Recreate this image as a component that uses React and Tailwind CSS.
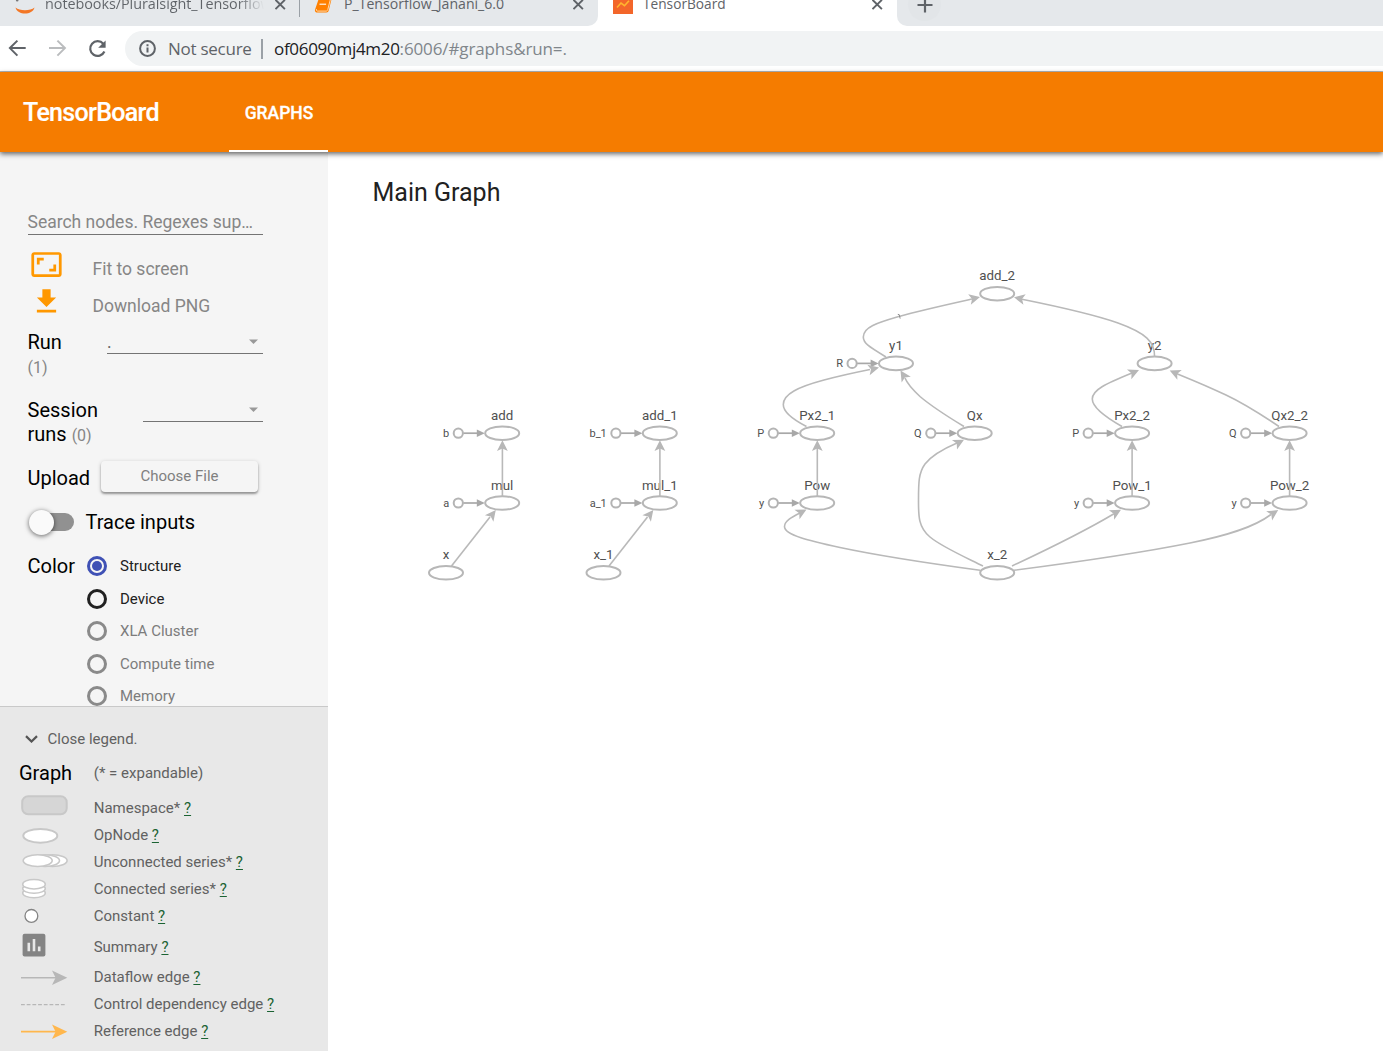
const CloseIcon = ({ className = '' }) => (
  <svg className={`size-[11px] shrink-0 ${className}`} viewBox="0 0 11 11" stroke="#5f6368" strokeWidth="1.9" fill="none">
    <path d="M0.5 0.8l9.4 9.4M9.9 0.8l-9.4 9.4" />
  </svg>
);

function BrowserChrome() {
  return (
    <div className="h-[72px] shrink-0 border-b border-[#b4b7ba] bg-white font-['Open_Sans',sans-serif] text-[#5f6368]">
      <div className="flex h-[26px] overflow-hidden">
        <div className="flex w-[598px] rounded-br-[10px] bg-[#e5e8eb]">
          <div className="-mt-[7px] flex h-[22px] w-[299px] items-center pl-[15px]">
            <svg className="mr-[10px] size-[20px] shrink-0 overflow-visible" viewBox="0 0 20 20" fill="#f37726">
              <path d="M0.5 13.6c4 3.6 15 3.6 19 0c-2 8-17 8-19 0z" />
              <circle cx="2.2" cy="6.3" r="1.3" fill="#767677" />
            </svg>
            <div className="w-[219px] overflow-hidden bg-linear-to-r from-[#5f6368] from-88% to-transparent bg-clip-text text-[14.4px] tracking-[-0.05px] whitespace-nowrap text-transparent">
              notebooks/Pluralsight_Tensorflow
            </div>
            <CloseIcon className="ml-[11px]" />
          </div>
          <div className="h-[17px] w-px bg-[#9aa0a6]" />
          <div className="-mt-[7px] flex h-[22px] w-[298px] items-center pl-[14px]">
            <svg className="mr-[11px] size-[19px] shrink-0 overflow-visible" viewBox="0 0 19 19">
              <path d="M5.5 1.5h10.6c1.3 0 1.9 0.8 1.6 1.9l-3 12.2c-0.3 1.3-1 2-2.4 2H3.4c-1.7 0-2.8-1.3-2.4-2.8z" fill="#ff8000" />
              <path d="M2.5 14c-0.5 1.4 0.1 2.1 1.3 2.1h8.2c1 0 1.5-0.6 1.8-1.6l2.8-11" stroke="#ffd9ae" strokeWidth="1" fill="none" />
              <path d="M5.5 9.2h6.6" stroke="#fff" strokeWidth="1.1" />
            </svg>
            <div className="w-[229px] text-[14.1px] whitespace-nowrap">P_Tensorflow_Janani_6.0</div>
            <CloseIcon />
          </div>
        </div>
        <div className="-mt-[7px] flex h-[22px] w-[299px] items-center pl-[15px]">
          <svg className="mr-[10px] size-[20px] shrink-0 self-end" viewBox="0 0 20 20">
            <rect width="20" height="19" fill="#f3662a" />
            <path d="M4 12.5l4-4.5 3.5 2.7 4.5-5" stroke="#ffb52e" strokeWidth="1.6" fill="none" />
          </svg>
          <div className="w-[229px] text-[13.7px] whitespace-nowrap">TensorBoard</div>
          <CloseIcon />
        </div>
        <div className="flex flex-1 rounded-bl-[10px] bg-[#e5e8eb] pl-[11px]">
          <div className="-mt-[12px] flex size-[33px] items-center justify-center rounded-full bg-[#e2e5e8]">
            <svg className="size-[16px]" viewBox="0 0 16 16" stroke="#5f6368" strokeWidth="2.2">
              <path d="M8 0.5v15M0.5 8h15" />
            </svg>
          </div>
        </div>
      </div>
      <div className="flex h-[45px] items-center text-[17px]">
        <div className="flex w-[125px] items-center pl-[8px]">
          <svg className="size-[19px]" viewBox="0 0 19 19" fill="none" stroke="#5f6368" strokeWidth="2">
            <path d="M17.7 9.1H2.5M9.4 1.6L1.9 9.1l7.5 7.5" />
          </svg>
          <svg className="ml-[21px] size-[19px]" viewBox="0 0 19 19" fill="none" stroke="#babcbe" strokeWidth="2">
            <path d="M1 9.1h15.5M9.4 1.6l7.5 7.5-7.5 7.5" />
          </svg>
          <svg className="ml-[20px] size-[22px]" viewBox="0 0 22 22">
            <path d="M16.3 5.8A7.4 7.4 0 1 0 17.4 13.5" fill="none" stroke="#5f6368" strokeWidth="2.2" />
            <path d="M18.6 2.4v7.4h-7.4z" fill="#5f6368" />
          </svg>
        </div>
        <div className="flex h-[35px] flex-1 items-center rounded-l-full bg-[#f1f3f4] pl-[14px] whitespace-nowrap">
          <svg className="mr-[12px] size-[17px]" viewBox="0 0 17 17" fill="none" stroke="#5f6368" strokeWidth="2">
            <circle cx="8.5" cy="8.5" r="7.4" />
            <path d="M8.5 7.5v5M8.5 4.2v2" />
          </svg>
          <span className="w-[93px] tracking-[-0.26px]">Not secure</span>
          <span className="mr-[11px] h-[20px] w-[2px] bg-[#9aa0a6]" />
          <span className="tracking-[-0.3px] text-[#202124]">of06090mj4m20</span>
          <span className="tracking-[-0.12px] text-[#80868b]">:6006/#graphs&amp;run=.</span>
        </div>
      </div>
    </div>
  );
}

function Header() {
  return (
    <header className="z-10 flex h-[80px] shrink-0 bg-[#f57c00] font-medium text-white shadow-[0_2px_5px_rgba(0,0,0,0.6)]">
      <div className="flex w-[229px] items-center pt-[2px] pl-[23px] text-[25px] tracking-[-0.68px] [-webkit-text-stroke:0.2px_white]">TensorBoard</div>
      <div className="flex w-[99px] items-center justify-center border-b-2 border-white pt-[5px] pl-[1px] text-[17.5px] [-webkit-text-stroke:0.3px_white]">GRAPHS</div>
    </header>
  );
}

const Select = ({ value, className }) => (
  <div className={`flex h-[24px] items-center justify-between border-b border-[#747474] pr-[5px] text-[17.5px] text-[#666] ${className}`}>
    <span>{value}</span>
    <svg className="h-[5px] w-[9px]" viewBox="0 0 9 5" fill="#999"><path d="M0 0.5h9L4.5 5z" /></svg>
  </div>
);

const COLORS = [
  { label: 'Structure', ring: 'border-[#3f51b5]', text: 'text-[#212121]', on: true },
  { label: 'Device', ring: 'border-[#212121]', text: 'text-[#212121]' },
  { label: 'XLA Cluster', ring: 'border-[#8a8a8a]', text: 'text-[#7c7c7c]' },
  { label: 'Compute time', ring: 'border-[#8a8a8a]', text: 'text-[#7c7c7c]' },
  { label: 'Memory', ring: 'border-[#8a8a8a]', text: 'text-[#7c7c7c]' },
];

function Controls() {
  return (
    <div className="h-[554px] shrink-0 overflow-hidden pt-[58px] pl-[27.5px] text-[20px] leading-[24px] text-black">
      <div className="h-[25px] w-[235.5px] border-b border-[#747474] text-[17.5px] text-[#868686]">Search nodes. Regexes sup…</div>
      <div className="mt-[15px] flex h-[37px] items-center text-[17.5px] text-[#868686]">
        <svg className="-mt-[9px] mr-[29.5px] ml-[2.5px] size-[33px]" viewBox="0 0 24 24" fill="#ff9800">
          <path d="M19 12h-2v3h-3v2h5v-5zM7 9h3V7H5v5h2V9zm14-6H3c-1.1 0-2 .9-2 2v14c0 1.1.9 2 2 2h18c1.1 0 2-.9 2-2V5c0-1.1-.9-2-2-2zm0 16.01H3V4.99h18v14.02z" />
        </svg>
        Fit to screen
      </div>
      <div className="flex h-[37px] items-center text-[17.5px] text-[#868686]">
        <svg className="-mt-[9px] mr-[29.5px] ml-[2.5px] size-[33px]" viewBox="0 0 24 24" fill="#ff9800">
          <path d="M19 9h-4V3H9v6H5l7 7 7-7zM5 18v2h14v-2H5z" />
        </svg>
        Download PNG
      </div>
      <div className="mt-[6px] flex">
        <div className="w-[79.5px]">
          Run
          <div className="mt-[2px] text-[16px] text-[#868686]">(1)</div>
        </div>
        <Select value="." className="w-[156px]" />
      </div>
      <div className="mt-[18px] flex">
        <div className="w-[115.5px]">
          Session
          <div className="h-[24px]">runs <span className="text-[16px] text-[#868686]">(0)</span></div>
        </div>
        <Select value="" className="w-[120px]" />
      </div>
      <div className="mt-[15px] flex h-[32px]">
        <div className="w-[73.5px] pt-[5px]">Upload</div>
        <div className="h-[31px] w-[157px] rounded-[4px] text-center text-[15px] leading-[30px] text-[#808080] shadow-[0_2px_2px_rgba(0,0,0,0.3),0_1px_4px_rgba(0,0,0,0.2)]">Choose File</div>
      </div>
      <div className="mt-[17px] flex h-[24px] items-center">
        <div className="mr-[11.5px] ml-[2px] flex h-[17.5px] w-[44.5px] items-center rounded-full bg-[#919191]">
          <div className="-ml-[0.5px] size-[25px] shrink-0 rounded-full bg-[#fafafa] shadow-[0_1px_5px_rgba(0,0,0,0.6)]" />
        </div>
        Trace inputs
      </div>
      <div className="mt-[16px] flex">
        <div className="w-[59.5px] pt-[4px]">Color</div>
        <div className="text-[15px]">
          {COLORS.map((c) => (
            <div key={c.label} className={`flex h-[32.5px] items-center ${c.text}`}>
              <span className={`mr-[13px] flex size-[20px] items-center justify-center rounded-full border-3 ${c.ring}`}>
                {c.on && <span className="size-[10px] rounded-full bg-[#3f51b5]" />}
              </span>
              {c.label}
            </div>
          ))}
        </div>
      </div>
    </div>
  );
}

const S = { fill: '#fff', stroke: '#c8c8c8', strokeWidth: 2 };
const LEGEND = [
  ['Namespace*', <rect x="3.2" y="1.2" width="44.5" height="18" rx="6" {...S} fill="#d6d6d6" />],
  ['OpNode', <ellipse cx="21.3" cy="13.8" rx="17" ry="6.9" {...S} />],
  ['Unconnected series*', [33.6, 26, 18.7].map((x) => <ellipse key={x} cx={x} cy="11.6" rx="14.5" ry="5.9" {...S} strokeWidth="1.6" />)],
  ['Connected series*', [17, 12.6, 8.2].map((y) => <ellipse key={y} cx="15" cy={y} rx="11.3" ry="4.7" {...S} strokeWidth="1.5" />)],
  ['Constant', <circle cx="12.4" cy="12.9" r="6.4" fill="#fff" stroke="#848484" strokeWidth="1.3" />],
  ['Summary', <>
    <rect x="3.6" y="3.7" width="22.8" height="22.8" rx="2" fill="#848484" />
    <path d="M8.5 12.7h2.6v8.6H8.5zM13.7 8.9h2.6v12.4h-2.6zM18.9 16.5h2.6v4.8h-2.6z" fill="#e8e8e8" />
  </>],
  ['Dataflow edge', <>
    <path d="M2 13.7h36" stroke="#b7b7b7" strokeWidth="1.6" />
    <path d="M33 6.4l15.3 7.3L33 21l3.6-7.3z" fill="#b7b7b7" />
  </>],
  ['Control dependency edge', <path d="M2 13.6h45" stroke="#b7b7b7" strokeWidth="1.4" strokeDasharray="3.8 1.9" />],
  ['Reference edge', <>
    <path d="M2 13.7h36" stroke="#ffb74d" strokeWidth="1.8" />
    <path d="M33 6.4l15.3 7.3L33 21l3.6-7.3z" fill="#ffb74d" />
  </>],
];

function Legend() {
  return (
    <div className="flex-1 border-t border-[#c9c9c9] bg-[#e8e8e8] pt-[19px] pl-[19px] text-[15px] text-[#616161]">
      <div className="flex h-[26px] items-center">
        <svg className="mr-[9.5px] ml-[6px] h-[8px] w-[13px]" viewBox="0 0 13 8" fill="none" stroke="#555" strokeWidth="2.2"><path d="M1 1.1l5.5 5.4L12 1.1" /></svg>
        Close legend.
      </div>
      <div className="mt-[8px] flex h-[26px] items-center">
        <span className="w-[74.8px] text-[20px] text-black">Graph</span>(* = expandable)
      </div>
      <div className="mt-[8.5px]">
        {LEGEND.map(([label, icon]) => (
          <div key={label} className={`flex items-center ${label === 'Summary' ? 'h-[34px]' : 'h-[27px]'}`}>
            <svg className={`mr-[24.7px] w-[50px] ${label === 'Summary' ? 'h-[34px]' : 'h-[27px]'}`} fill="none">{icon}</svg>
            <span className={label === 'Summary' ? 'pt-[1px]' : ''}>{label} <a className="text-[#1b6333] underline underline-offset-[2px]">?</a></span>
          </div>
        ))}
      </div>
    </div>
  );
}

const NODES = [
  ['add_2', 997.2, 293.7], ['y1', 896, 363.4, 'R'], ['y2', 1154.6, 363.4],
  ['add', 502.2, 433.2, 'b'], ['add_1', 659.8, 433.2, 'b_1'], ['Px2_1', 817.2, 433.2, 'P'],
  ['Qx', 974.7, 433.2, 'Q'], ['Px2_2', 1132.1, 433.2, 'P'], ['Qx2_2', 1289.6, 433.2, 'Q'],
  ['mul', 502.2, 503, 'a'], ['mul_1', 659.8, 503, 'a_1'], ['Pow', 817.2, 503, 'y'],
  ['Pow_1', 1132.1, 503, 'y'], ['Pow_2', 1289.6, 503, 'y'],
  ['x', 446, 572.8], ['x_1', 603.5, 572.8], ['x_2', 997.2, 572.8],
];

/* path, arrow tip x, arrow tip y, arrow angle */
const EDGES = [
  ['M886 357C868 346 863.3 343 863.3 337C863.3 327 877 323 899 316.5C920 310.5 945 305 972 299', 980, 297, -14],
  ['M1154.6 357C1155 342 1146 333 1118 323C1095 315 1065 308 1022 299.3', 1014, 297.3, 192],
  ['M806.5 426.5C790 418 783.2 411 783.3 404.5C783.3 394 798 387 824 380C843 375 860 371.5 870 369.5', 879, 367.5, -13],
  ['M964 426.5C945 415 930 405 920 396.5C912 389 907 383 905 378', 900.5, 370.5, -122],
  ['M980 570.3C930 563.5 880 556 840 547.5C810 541 784.3 535 784.5 526.5C784.5 521 792 517 800 513', 806.5, 509.5, -28],
  ['M983 566C965 557 942 547 930 537C918 527 918.5 515 918.5 500C918.5 483 918.5 473 925 464C932 455 943 449 957 443', 964, 439.7, -28],
  ['M1122 426.5C1100 414 1092.3 405 1092.3 399C1092.3 390 1105 384 1132 373', 1139, 370, -24],
  ['M1279 426.5C1262 415 1245 404 1226 395C1205 385 1190 379 1176 373.3', 1169.7, 370.5, 204],
  ['M1012 566C1045 550.5 1080 534 1114 513.7', 1121, 509.7, -29],
  ['M1014 570.3C1070 563 1150 551 1190 543C1225 536 1253 528 1271 514.5', 1278.2, 510, -33],
  ['M451.5 566L490 517', 495.8, 510, -52],
  ['M609 566L647.5 517', 653.3, 510, -52],
  ...[502.4, 659.9, 817.3, 1132.1, 1289.6].map((x) => [`M${x} 496.5V446`, x, 440.3, -90]),
];

function Graph() {
  return (
    <svg className="block h-[799px] w-[1055px]" viewBox="328 252 1055 799" fontFamily="Roboto, sans-serif" fill="#505050">
      {NODES.map(([name, x, y, input]) => (
        <g key={name}>
          {input && (
            <g>
              <path d={`M${x - 39} ${y}h15`} stroke="#a8a8a8" strokeWidth="1.7" />
              <path d={`M${x - 25.4} ${y - 3.8}l8 3.8l-8 3.8z`} fill="#a8a8a8" />
              <circle cx={x - 43.9} cy={y} r="4.6" fill="#fff" stroke="#b4b4b4" strokeWidth="2" />
              <text x={x - 53} y={y + 4} textAnchor="end" fontSize="11">{input}</text>
            </g>
          )}
          <ellipse cx={x} cy={y} rx="17" ry="6.8" fill="#fff" stroke="#b7b7b7" strokeWidth="2" />
          <text x={x} y={y - 13.4} textAnchor="middle" fontSize="13.3">{name}</text>
        </g>
      ))}
      {EDGES.map(([d, x, y, angle]) => (
        <g key={d}>
          <path d={d} fill="none" stroke="#b9b9b9" strokeWidth="1.6" />
          <path d="M0 0L-10.8-5.4L-8.2 0L-10.8 5.4z" fill="#b7b7b7" transform={`translate(${x} ${y}) rotate(${angle})`} />
        </g>
      ))}
      <path d="M897.8 314.4l1.4 0.2 1 4" fill="none" stroke="#777" strokeWidth="0.8" />
    </svg>
  );
}

export default function App() {
  return (
    <div className="flex h-[1051px] w-[1383px] flex-col overflow-hidden bg-white font-[Roboto,sans-serif]">
      <BrowserChrome />
      <Header />
      <div className="flex min-h-0 flex-1">
        <aside className="flex w-[328px] shrink-0 flex-col bg-[#f5f5f5]">
          <Controls />
          <Legend />
        </aside>
        <main className="min-w-0 flex-1">
          <h1 className="h-[100px] pt-[23px] pl-[44.5px] text-[25px] leading-[36px] text-[#212121]">Main Graph</h1>
          <Graph />
        </main>
      </div>
    </div>
  );
}
